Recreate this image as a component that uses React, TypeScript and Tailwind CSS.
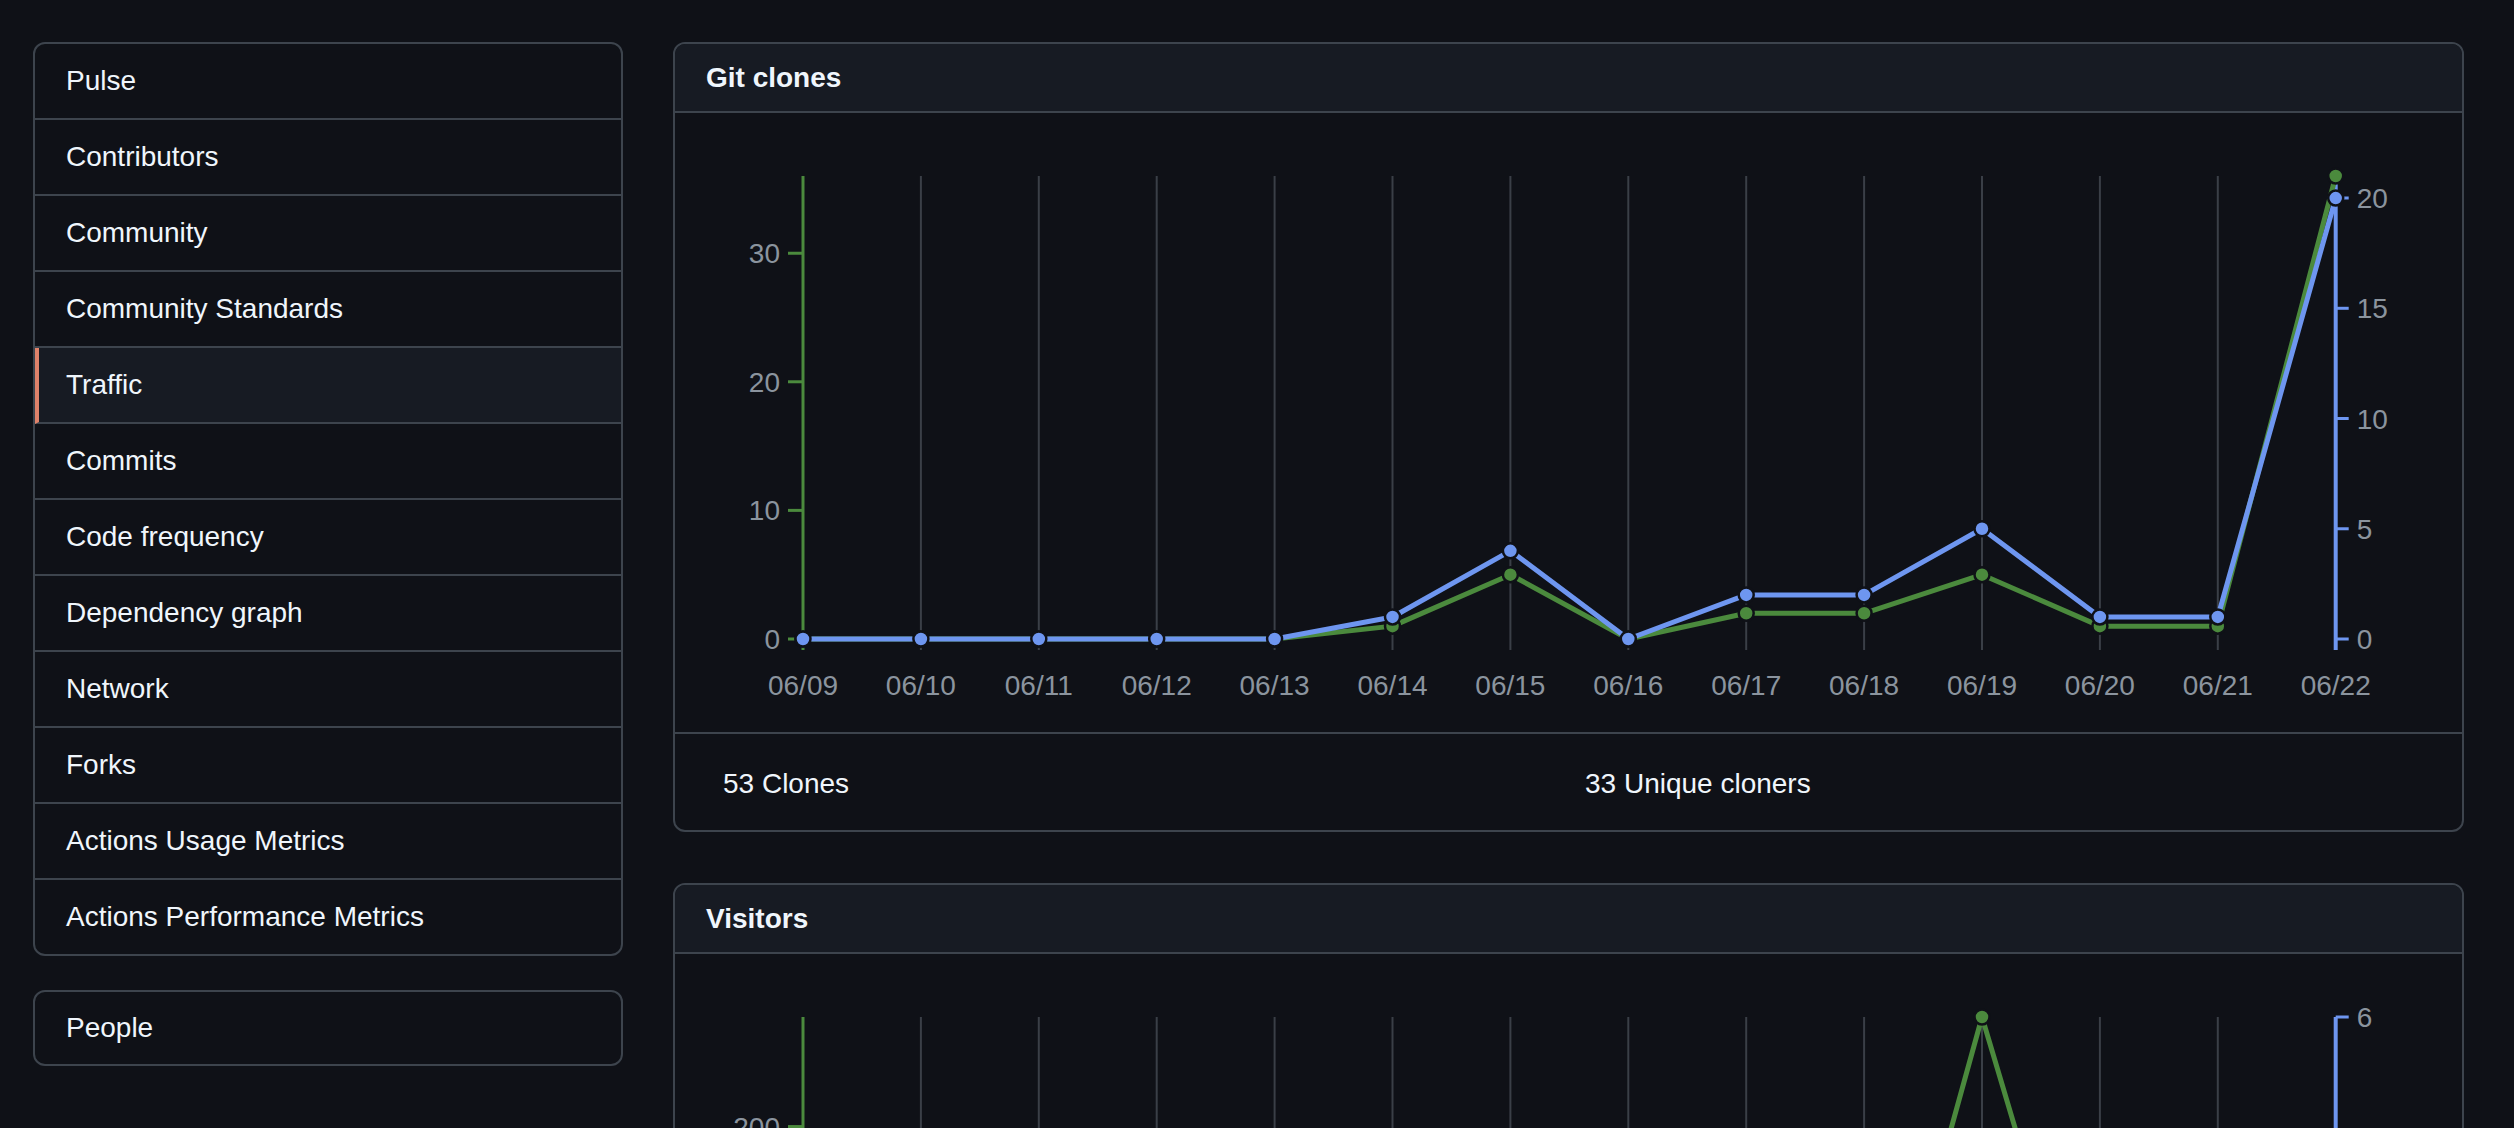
const menu = [
  "Pulse",
  "Contributors",
  "Community",
  "Community Standards",
  "Traffic",
  "Commits",
  "Code frequency",
  "Dependency graph",
  "Network",
  "Forks",
  "Actions Usage Metrics",
  "Actions Performance Metrics",
]

const dates = ["06/09", "06/10", "06/11", "06/12", "06/13", "06/14", "06/15", "06/16", "06/17", "06/18", "06/19", "06/20", "06/21", "06/22"]

type ChartProps = {
  green: number[]
  blue: number[]
  leftMax: number
  rightMax: number
  leftTicks: number[]
  rightTicks: number[]
}

const X0 = 128
const STEP = 117.9
const TOP = 63
const ZERO = 526

function Chart({ green, blue, leftMax, rightMax, leftTicks, rightTicks }: ChartProps) {
  const x = (i: number) => X0 + i * STEP
  const yl = (v: number) => ZERO - (v * (ZERO - TOP)) / leftMax
  const yr = (v: number) => ZERO - (v * (ZERO - TOP)) / rightMax
  const axisR = x(dates.length - 1)
  const gPts = green.map((v, i) => `${x(i)},${yl(v)}`).join(" ")
  const bPts = blue.map((v, i) => `${x(i)},${yr(v)}`).join(" ")

  return (
    <svg width="100%" height="619" className="block font-['Liberation_Sans',sans-serif]">
      {dates.slice(1, -1).map((d, i) => (
        <line key={d} x1={x(i + 1)} x2={x(i + 1)} y1={TOP} y2={537} stroke="#3a3f47" strokeWidth="2" />
      ))}

      {/* left axis */}
      <line x1={X0} x2={X0} y1={TOP} y2={537} stroke="#4b8a3d" strokeWidth="3" />
      {leftTicks.map((t) => (
        <g key={t}>
          <line x1={X0 - 15} x2={X0} y1={yl(t)} y2={yl(t)} stroke="#4b8a3d" strokeWidth="3" />
          <text x={105} y={yl(t) + 10} textAnchor="end" fontSize="28" fill="#8b949e">
            {t}
          </text>
        </g>
      ))}

      {/* right axis */}
      <line x1={axisR} x2={axisR} y1={TOP} y2={537} stroke="#6e96f0" strokeWidth="4" />
      {rightTicks.map((t) => (
        <g key={t}>
          <line x1={axisR} x2={axisR + 13} y1={yr(t)} y2={yr(t)} stroke="#6e96f0" strokeWidth="3" />
          <text x={axisR + 21} y={yr(t) + 10} fontSize="28" fill="#8b949e">
            {t}
          </text>
        </g>
      ))}

      {dates.map((d, i) => (
        <text key={d} x={x(i)} y={582} textAnchor="middle" fontSize="28" fill="#8b949e">
          {d}
        </text>
      ))}

      <polyline points={gPts} fill="none" stroke="#4b8a3d" strokeWidth="5" strokeLinejoin="round" />
      {green.map((v, i) => (
        <circle key={i} cx={x(i)} cy={yl(v)} r="7.5" fill="#4b8a3d" stroke="#0f1117" strokeWidth="2.5" />
      ))}
      <polyline points={bPts} fill="none" stroke="#6e96f0" strokeWidth="5" strokeLinejoin="round" />
      {blue.map((v, i) => (
        <circle key={i} cx={x(i)} cy={yr(v)} r="7.5" fill="#6e96f0" stroke="#0f1117" strokeWidth="2.5" />
      ))}
    </svg>
  )
}

function Panel({ title, left, right, children }: { title: string; left: string; right: string; children: React.ReactNode }) {
  return (
    <div className="border-2 border-[#3d444d] rounded-xl overflow-hidden">
      <div className="h-[69px] flex items-center pl-[31px] bg-[#171b23] border-b-2 border-[#3d444d]">
        <h2 className="text-[28px] font-semibold text-[#f0f6fc]">{title}</h2>
      </div>
      {children}
      <div className="h-[98px] flex items-center pt-[3px] border-t-2 border-[#3d444d] text-[28px] text-[#f0f6fc]">
        <div className="w-[910px] pl-[48px]">{left}</div>
        <div>{right}</div>
      </div>
    </div>
  )
}

export default function App() {
  return (
    <div className="min-h-screen bg-[#0f1117] font-['Liberation_Sans',sans-serif] flex gap-[50px] pt-[42px] pl-[33px] pr-[50px] pb-[60px]">
      <div className="w-[590px] shrink-0 flex flex-col gap-[34px]">
        <div className="border-2 border-[#3d444d] rounded-xl overflow-hidden">
          {menu.map((m, i) => (
            <div
              key={m}
              className={
                m === "Traffic"
                  ? "h-[76px] flex items-center pl-[27px] text-[28px] text-[#f0f6fc] bg-[#171b23] border-l-4 border-l-[#e0826a] border-b-2 border-b-[#3d444d]"
                  : i === menu.length - 1
                  ? "h-[74px] flex items-center pl-[31px] text-[28px] text-[#f0f6fc]"
                  : "h-[76px] flex items-center pl-[31px] text-[28px] text-[#f0f6fc] border-b-2 border-[#3d444d]"
              }
            >
              {m}
            </div>
          ))}
        </div>
        <div className="border-2 border-[#3d444d] rounded-xl">
          <div className="h-[72px] flex items-center pl-[31px] text-[28px] text-[#f0f6fc]">People</div>
        </div>
      </div>

      <div className="flex-1 flex flex-col gap-[51px]">
        <Panel title="Git clones" left="53 Clones" right="33 Unique cloners">
          <Chart
            green={[0, 0, 0, 0, 0, 1, 5, 0, 2, 2, 5, 1, 1, 36]}
            blue={[0, 0, 0, 0, 0, 1, 4, 0, 2, 2, 5, 1, 1, 20]}
            leftMax={36}
            rightMax={21}
            leftTicks={[0, 10, 20, 30]}
            rightTicks={[0, 5, 10, 15, 20]}
          />
        </Panel>
        <Panel title="Visitors" left="1,046 Views" right="37 Unique visitors">
          <Chart
            green={[30, 45, 20, 25, 40, 35, 60, 15, 50, 21, 262, 38, 20, 25]}
            blue={[2, 3, 1, 2, 3, 2, 4, 1, 3, 2, 4, 3, 1, 2]}
            leftMax={262}
            rightMax={6}
            leftTicks={[0, 100, 200]}
            rightTicks={[0, 2, 4, 6]}
          />
        </Panel>
      </div>
    </div>
  )
}
